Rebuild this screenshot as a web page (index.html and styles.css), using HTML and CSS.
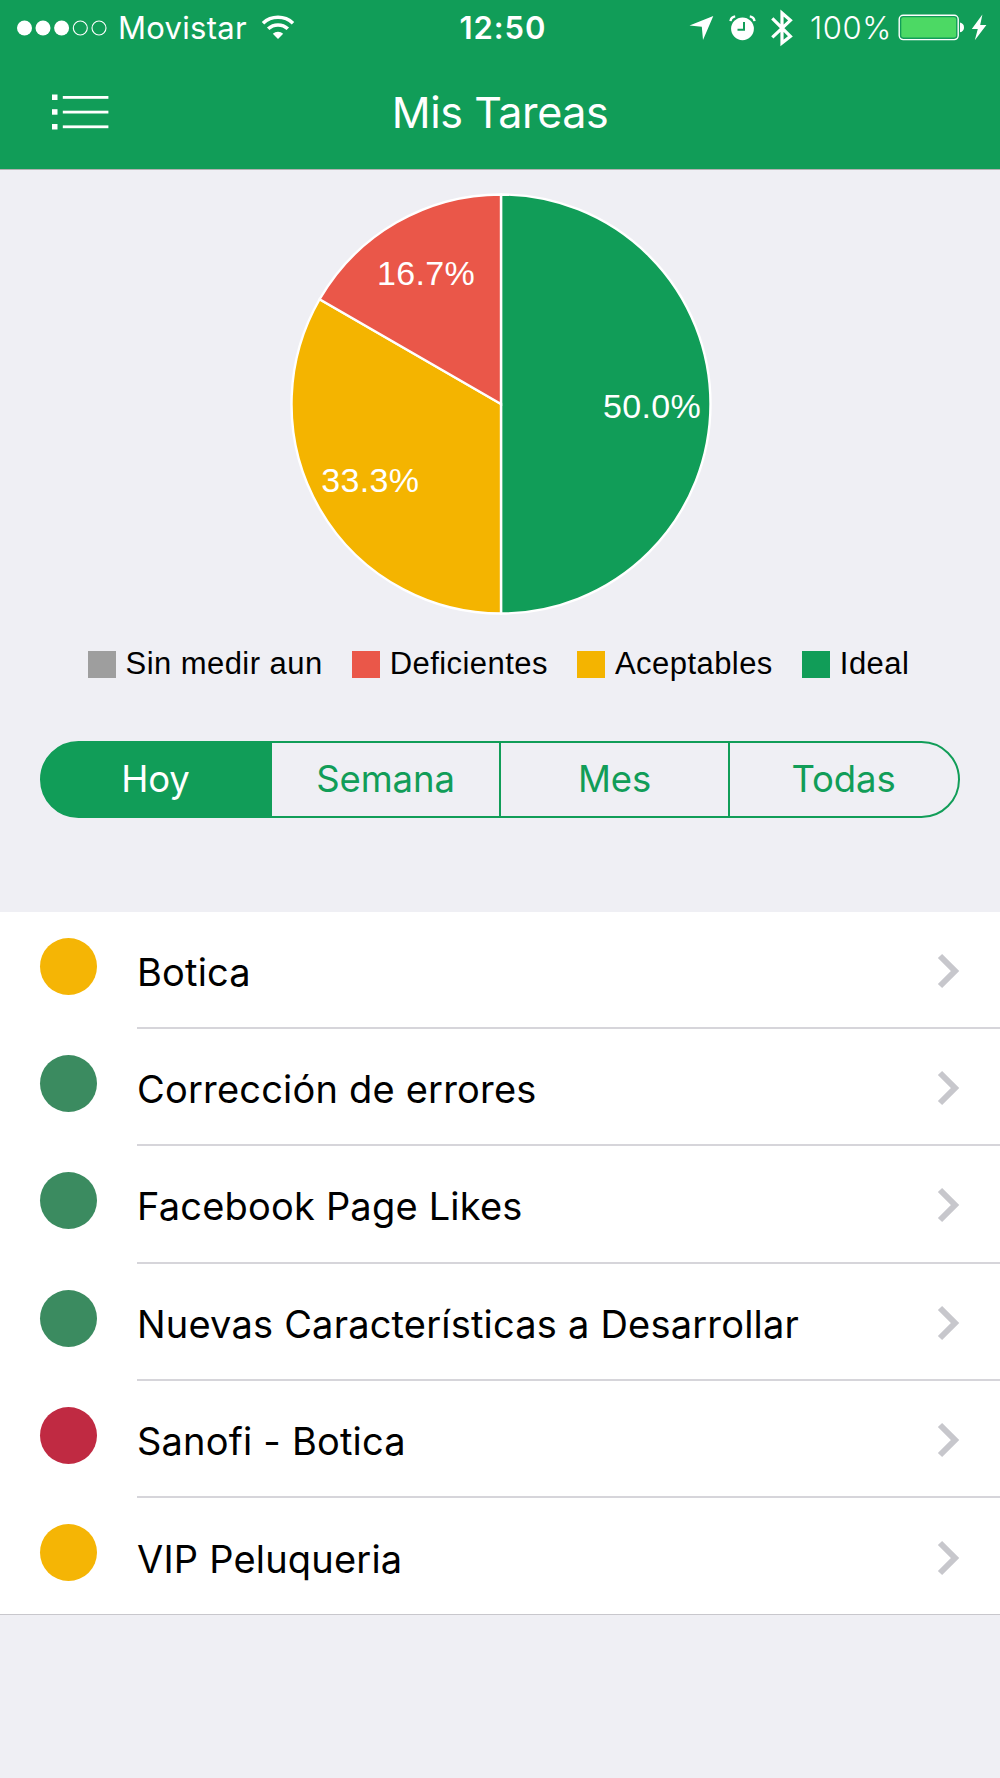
FILE: index.html
```
<!DOCTYPE html>
<html lang="es">
<head>
    <meta charset="UTF-8">
    <meta name="viewport" content="width=device-width, initial-scale=1.0">
    <title>Mis Tareas</title>
    <link rel="stylesheet" href="styles.css">
</head>
<body>
    <header class="header">
        <div class="status-bar">
            <div class="status-left">
                <svg class="signal" width="92" height="18" viewBox="0 0 92 18">
                    <g fill="#fff">
                        <circle cx="8.5" cy="9" r="7.5"/>
                        <circle cx="27" cy="9" r="7.5"/>
                        <circle cx="45.6" cy="9" r="7.5"/>
                    </g>
                    <g fill="none" stroke="#fff" stroke-width="1.1">
                        <circle cx="64.3" cy="9" r="7"/>
                        <circle cx="83" cy="9" r="7"/>
                    </g>
                </svg>
                <span class="carrier">Movistar</span>
                <svg class="wifi" width="34" height="26" viewBox="0 0 34 26">
                    <g fill="none" stroke="#fff" stroke-width="3.6">
                        <path d="M2 9.2a22 22 0 0 1 30 0"/>
                        <path d="M7.2 14.8a14.4 14.4 0 0 1 19.6 0"/>
                    </g>
                    <path fill="#fff" d="M17 25l-5.2-5.3a7.6 7.6 0 0 1 10.4 0z"/>
                </svg>
            </div>
            <span class="time">12:50</span>
            <div class="status-right">
                <svg class="location" width="25" height="26" viewBox="0 0 25 26">
                    <path fill="#fff" d="M24.3 1L14 25l-1.2-13.2L.5 10.6z"/>
                </svg>
                <svg class="alarm" width="27" height="26" viewBox="0 0 27 26">
                    <circle cx="13.5" cy="13.8" r="11.4" fill="#fff"/>
                    <path d="M15 7v7.8H8.5" fill="none" stroke="#119d58" stroke-width="2"/>
                    <path d="M1.5 6.2Q2 2 6.2 1.4M25.5 6.2Q25 2 20.8 1.4" fill="none" stroke="#fff" stroke-width="2.4"/>
                </svg>
                <svg class="bluetooth" width="22" height="38" viewBox="0 0 22 38">
                    <path d="M1.3 9.3L19.4 27.3 11 34V4L19.4 11.3 1.3 28.3" fill="none" stroke="#fff" stroke-width="3.2"/>
                </svg>
                <span class="percent">100%</span>
                <svg class="battery" width="67" height="27" viewBox="0 0 67 27">
                    <rect x="1.2" y="1.2" width="59" height="24.4" rx="4" fill="none" stroke="#fff" stroke-width="1.4"/>
                    <rect x="3.3" y="3.3" width="54.8" height="20.2" rx="2" fill="#4cd964"/>
                    <path fill="#fff" d="M62 8.6q4 1 4 4.8t-4 4.8z"/>
                </svg>
                <svg class="bolt" width="16" height="27" viewBox="0 0 16 27">
                    <path fill="#fff" d="M11.4.5L.8 15h6L3.8 26.2 15.4 11H9.2z"/>
                </svg>
            </div>
        </div>
        <div class="nav-bar">
            <svg class="menu-icon" width="58" height="38" viewBox="0 0 58 38">
                <g fill="#fff">
                    <rect x="1" y="1.5" width="5.5" height="5.5"/>
                    <rect x="1" y="16.2" width="5.5" height="5.5"/>
                    <rect x="1" y="31" width="5.5" height="5.5"/>
                    <rect x="11.8" y="3" width="45.6" height="2.8"/>
                    <rect x="11.8" y="17.7" width="45.6" height="2.8"/>
                    <rect x="11.8" y="32.4" width="45.6" height="2.8"/>
                </g>
            </svg>
            <h1 class="title">Mis Tareas</h1>
        </div>
    </header>

    <section class="chart">
        <svg class="pie" width="424" height="424" viewBox="-212 -212 424 424">
            <g stroke="#fff" stroke-width="2.4">
                <path class="ideal" d="M0 0V-209.5A209.5 209.5 0 0 1 0 209.5z"/>
                <path class="aceptable" d="M0 0V209.5A209.5 209.5 0 0 1 -181.4 -104.75z"/>
                <path class="deficiente" d="M0 0L-181.4 -104.75A209.5 209.5 0 0 1 0 -209.5z"/>
            </g>
            <text x="151" y="13.6">50.0%</text>
            <text x="-130.7" y="87.8">33.3%</text>
            <text x="-75" y="-118.8">16.7%</text>
        </svg>
        <ul class="legend">
            <li><span class="swatch sin-medir"></span>Sin medir aun</li>
            <li><span class="swatch deficiente"></span>Deficientes</li>
            <li><span class="swatch aceptable"></span>Aceptables</li>
            <li><span class="swatch ideal"></span>Ideal</li>
        </ul>
    </section>

    <div class="tabs">
        <button class="tab active">Hoy</button>
        <button class="tab">Semana</button>
        <button class="tab">Mes</button>
        <button class="tab">Todas</button>
    </div>

    <ul class="tasks">
        <li class="task">
            <span class="dot yellow"></span>
            <div class="task-body"><span class="task-name">Botica</span><svg class="chevron" viewBox="0 0 21 34"><path d="M2 2l15 15L2 32"/></svg></div>
        </li>
        <li class="task">
            <span class="dot green"></span>
            <div class="task-body"><span class="task-name">Corrección de errores</span><svg class="chevron" viewBox="0 0 21 34"><path d="M2 2l15 15L2 32"/></svg></div>
        </li>
        <li class="task">
            <span class="dot green"></span>
            <div class="task-body"><span class="task-name">Facebook Page Likes</span><svg class="chevron" viewBox="0 0 21 34"><path d="M2 2l15 15L2 32"/></svg></div>
        </li>
        <li class="task">
            <span class="dot green"></span>
            <div class="task-body"><span class="task-name">Nuevas Características a Desarrollar</span><svg class="chevron" viewBox="0 0 21 34"><path d="M2 2l15 15L2 32"/></svg></div>
        </li>
        <li class="task">
            <span class="dot red"></span>
            <div class="task-body"><span class="task-name">Sanofi - Botica</span><svg class="chevron" viewBox="0 0 21 34"><path d="M2 2l15 15L2 32"/></svg></div>
        </li>
        <li class="task">
            <span class="dot yellow"></span>
            <div class="task-body"><span class="task-name">VIP Peluqueria</span><svg class="chevron" viewBox="0 0 21 34"><path d="M2 2l15 15L2 32"/></svg></div>
        </li>
    </ul>
</body>
</html>
```
FILE: styles.css
```
* {
    box-sizing: border-box;
}

body {
    margin: 0;
    min-height: 1778px;
    background-color: #efeff4;
    font-family: Inter, Roboto, sans-serif;
    color: #000;
}

ul {
    list-style: none;
    margin: 0;
    padding: 0;
}

svg {
    display: block;
    flex: none;
}

.header {
    height: 170px;
    background-color: #119d58;
    border-bottom: 1px solid #b2b2b2;
    color: #fff;
}

/* status bar */
.status-bar {
    display: grid;
    grid-template-columns: 1fr 90px 1fr;
    height: 55px;
    padding: 0 13px 0 16px;
    font-size: 31px;
    line-height: 55px;
}

.status-left,
.status-right {
    display: flex;
    align-items: center;
}

.status-right {
    justify-content: flex-end;
}

.carrier {
    margin-left: 10px;
    width: 130px;
    letter-spacing: 0.3px;
}

.wifi {
    margin-left: 13px;
    margin-top: -2px;
}

.time {
    padding-left: 3px;
    font-weight: 600;
    letter-spacing: 0.9px;
    text-align: center;
    white-space: nowrap;
}

.alarm {
    margin-left: 15px;
}

.bluetooth {
    margin-left: 15px;
}

.percent {
    width: 82px;
    margin-left: 17px;
    font-weight: 350;
    letter-spacing: 0.6px;
    white-space: nowrap;
}

.battery {
    margin-left: 6px;
}

.bolt {
    margin-left: 6px;
}

/* navigation bar */
.nav-bar {
    display: grid;
    grid-template-columns: 58px 1fr 58px;
    align-items: center;
    height: 114px;
    padding: 0 51px;
}

.title {
    margin: 0;
    font-size: 43px;
    font-weight: 400;
    letter-spacing: -0.4px;
    line-height: 114px;
    text-align: center;
}

/* chart */
.chart {
    padding-top: 21.5px;
}

.pie {
    margin-left: 289.3px;
}

.pie text {
    fill: #fff;
    font-family: "Liberation Sans", Arial, sans-serif;
    font-size: 34px;
    letter-spacing: 0.3px;
    text-anchor: middle;
}

.ideal {
    fill: #119d58;
    background-color: #119d58;
}

.aceptable {
    fill: #f4b400;
    background-color: #f4b400;
}

.deficiente {
    fill: #ea5749;
    background-color: #ea5749;
}

.sin-medir {
    background-color: #9e9e9e;
}

.legend {
    display: flex;
    gap: 29.5px;
    height: 40px;
    margin-top: 28.5px;
    padding-left: 88px;
    font-family: "Liberation Sans", Arial, sans-serif;
    font-size: 31px;
    letter-spacing: 0.45px;
    line-height: 40px;
    white-space: nowrap;
}

.legend li {
    display: flex;
    align-items: center;
}

.swatch {
    width: 28px;
    height: 27px;
    margin-right: 9.5px;
}

/* period filter */
.tabs {
    display: grid;
    grid-template-columns: repeat(4, 1fr);
    height: 77px;
    margin: 57px 40px 0;
    border: 2px solid #119d58;
    border-radius: 39px;
}

.tab {
    margin-left: -1px;
    padding: 0 1px 2px 0;
    border: 0;
    border-left: 2px solid #119d58;
    background: none;
    color: #119d58;
    font-family: inherit;
    font-size: 36.5px;
    letter-spacing: -0.1px;
}

.tab.active {
    margin: -1px 0 -1px -1px;
    border-left: 0;
    border-radius: 38px 0 0 38px;
    background-color: #119d58;
    color: #fff;
}

/* task list */
.tasks {
    margin-top: 94px;
    background-color: #fff;
    border-bottom: 1px solid #c8c7cc;
}

.task {
    display: flex;
    height: 117.2px;
    padding-left: 40px;
}

.dot {
    flex: none;
    width: 57px;
    height: 57px;
    margin: 26px 40px 0 0;
    border-radius: 50%;
}

.yellow {
    background-color: #f5b505;
}

.green {
    background-color: #3b8b60;
}

.red {
    background-color: #c02a42;
}

.task-body {
    flex: 1;
    display: flex;
    align-items: center;
    justify-content: space-between;
    padding-right: 41px;
    border-bottom: 2px solid #d6d5da;
    font-size: 38px;
    letter-spacing: 0.2px;
}

.task:last-child {
    height: 116.4px;
}

.task:last-child .task-body {
    border-bottom: 0;
}

.task-name {
    padding-top: 5px;
    white-space: nowrap;
}

.chevron {
    width: 21px;
    height: 34px;
    margin-top: 3px;
    overflow: visible;
    fill: none;
    stroke: #c7c7cc;
    stroke-width: 6;
}
```
